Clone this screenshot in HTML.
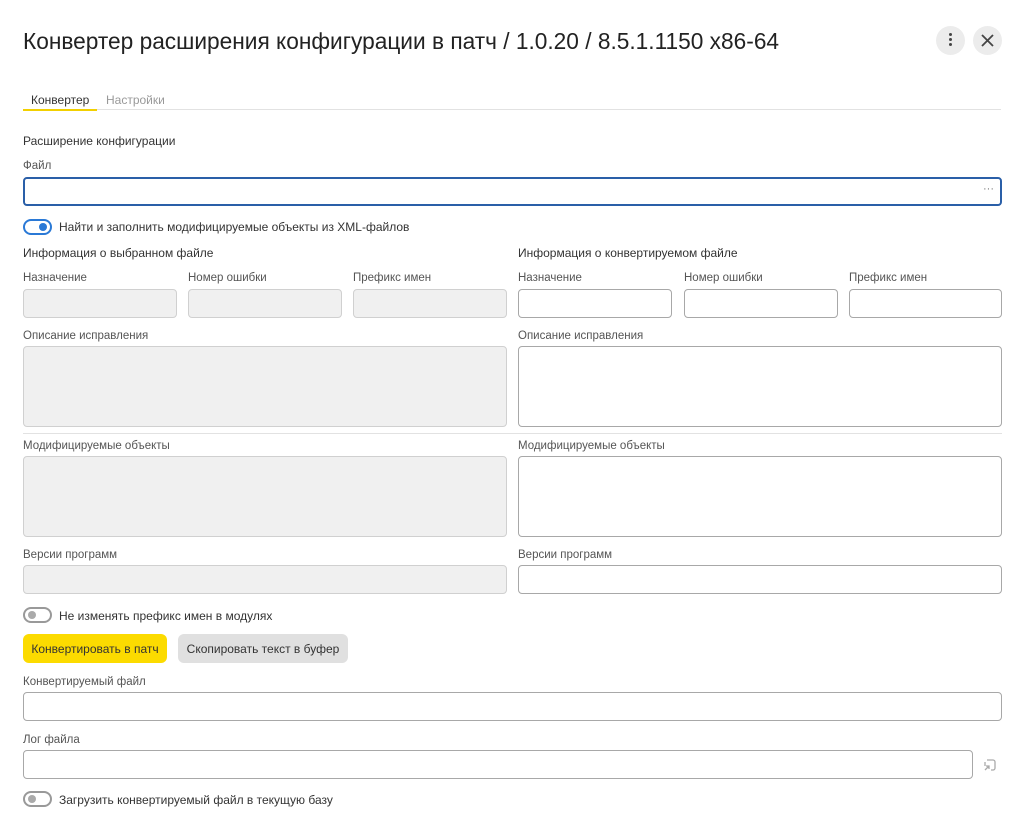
<!DOCTYPE html>
<html><head><meta charset="utf-8"><style>
*{box-sizing:border-box;margin:0;padding:0}
body{width:1024px;height:830px;background:#fff;font-family:"Liberation Sans",sans-serif;color:#333;position:relative;overflow:hidden}
.a{position:absolute}
.t{font-size:12px;color:#333;white-space:nowrap}
.l{font-size:11.5px;color:#555;white-space:nowrap}
.in{position:absolute;border:1px solid #a8a8a8;border-radius:4px;background:#fff}
.dis{background:#f0f0f0;border-color:#d0d0d0}
.tg{position:absolute;width:29px;height:16px;border:2px solid #999;border-radius:8px}
.tg i{position:absolute;top:2px;left:3px;width:8px;height:8px;border-radius:50%;background:#aaa}
.tg.on{border-color:#2a79d6}
.tg.on i{left:auto;right:3px;background:#2a79d6}
.btn{position:absolute;border-radius:6px;font-size:12px;color:#333;display:flex;align-items:center;justify-content:center}
</style></head><body>
<div class="a" style="left:23px;top:28px;font-size:22.7px;color:#222;white-space:nowrap">Конвертер расширения конфигурации в патч / 1.0.20 / 8.5.1.1150 x86-64</div>
<div class="a" style="left:936px;top:26px;width:29px;height:29px;border-radius:50%;background:#ececec"></div>
<div class="a" style="left:949px;top:33px;width:3px;height:3px;border-radius:50%;background:#444;box-shadow:0 5px 0 #444,0 10px 0 #444"></div>
<div class="a" style="left:973px;top:26px;width:29px;height:29px;border-radius:50%;background:#ececec"></div>
<svg class="a" style="left:980px;top:33px" width="15" height="15" viewBox="0 0 15 15"><path d="M2 2L13 13M13 2L2 13" stroke="#444" stroke-width="1.8"/></svg>

<div class="a t" style="left:31px;top:93px">Конвертер</div>
<div class="a" style="left:106px;top:93px;font-size:12px;color:#999">Настройки</div>
<div class="a" style="left:23px;top:109px;width:978px;height:1px;background:#e2e2e2"></div>
<div class="a" style="left:23px;top:109px;width:74px;height:2px;background:#f2d000"></div>

<div class="a t" style="left:23px;top:134px">Расширение конфигурации</div>
<div class="a l" style="left:23px;top:160px">Файл</div>
<div class="in" style="left:23px;top:177px;width:979px;height:29px;border:2px solid #2a5fa8"></div>
<div class="a" style="left:983px;top:183px;font-size:11px;color:#777">···</div>

<div class="tg on" style="left:23px;top:219px"><i></i></div>
<div class="a t" style="left:59px;top:220px">Найти и заполнить модифицируемые объекты из XML-файлов</div>

<div class="a t" style="left:23px;top:246px">Информация о выбранном файле</div>
<div class="a t" style="left:518px;top:246px">Информация о конвертируемом файле</div>

<div class="a l" style="left:23px;top:272px">Назначение</div>
<div class="a l" style="left:188px;top:272px">Номер ошибки</div>
<div class="a l" style="left:353px;top:272px">Префикс имен</div>
<div class="a l" style="left:518px;top:272px">Назначение</div>
<div class="a l" style="left:684px;top:272px">Номер ошибки</div>
<div class="a l" style="left:849px;top:272px">Префикс имен</div>
<div class="in dis" style="left:23px;top:289px;width:154px;height:29px"></div>
<div class="in dis" style="left:188px;top:289px;width:154px;height:29px"></div>
<div class="in dis" style="left:353px;top:289px;width:154px;height:29px"></div>
<div class="in" style="left:518px;top:289px;width:154px;height:29px"></div>
<div class="in" style="left:684px;top:289px;width:154px;height:29px"></div>
<div class="in" style="left:849px;top:289px;width:153px;height:29px"></div>

<div class="a l" style="left:23px;top:330px">Описание исправления</div>
<div class="a l" style="left:518px;top:330px">Описание исправления</div>
<div class="in dis" style="left:23px;top:346px;width:484px;height:81px"></div>
<div class="in" style="left:518px;top:346px;width:484px;height:81px"></div>
<div class="a" style="left:23px;top:433px;width:979px;height:1px;background:#e2e2e2"></div>

<div class="a l" style="left:23px;top:440px">Модифицируемые объекты</div>
<div class="a l" style="left:518px;top:440px">Модифицируемые объекты</div>
<div class="in dis" style="left:23px;top:456px;width:484px;height:81px"></div>
<div class="in" style="left:518px;top:456px;width:484px;height:81px"></div>

<div class="a l" style="left:23px;top:549px">Версии программ</div>
<div class="a l" style="left:518px;top:549px">Версии программ</div>
<div class="in dis" style="left:23px;top:565px;width:484px;height:29px"></div>
<div class="in" style="left:518px;top:565px;width:484px;height:29px"></div>

<div class="tg" style="left:23px;top:607px"><i></i></div>
<div class="a t" style="left:59px;top:609px">Не изменять префикс имен в модулях</div>

<div class="btn" style="left:23px;top:634px;width:144px;height:29px;background:#fcdb00">Конвертировать в патч</div>
<div class="btn" style="left:178px;top:634px;width:170px;height:29px;background:#e0e0e0">Скопировать текст в буфер</div>

<div class="a l" style="left:23px;top:676px">Конвертируемый файл</div>
<div class="in" style="left:23px;top:692px;width:979px;height:29px"></div>
<div class="a l" style="left:23px;top:734px">Лог файла</div>
<div class="in" style="left:23px;top:750px;width:950px;height:29px"></div>
<svg class="a" style="left:982px;top:757px" width="16" height="16" viewBox="0 0 16 16"><path d="M5 3H11a2 2 0 0 1 2 2V11a2 2 0 0 1-2 2H9M3 9V5M3 13L7 9M4 9H7V12" stroke="#aaa" stroke-width="1.3" fill="none"/></svg>

<div class="tg" style="left:23px;top:791px"><i></i></div>
<div class="a t" style="left:59px;top:793px">Загрузить конвертируемый файл в текущую базу</div>
</body></html>
